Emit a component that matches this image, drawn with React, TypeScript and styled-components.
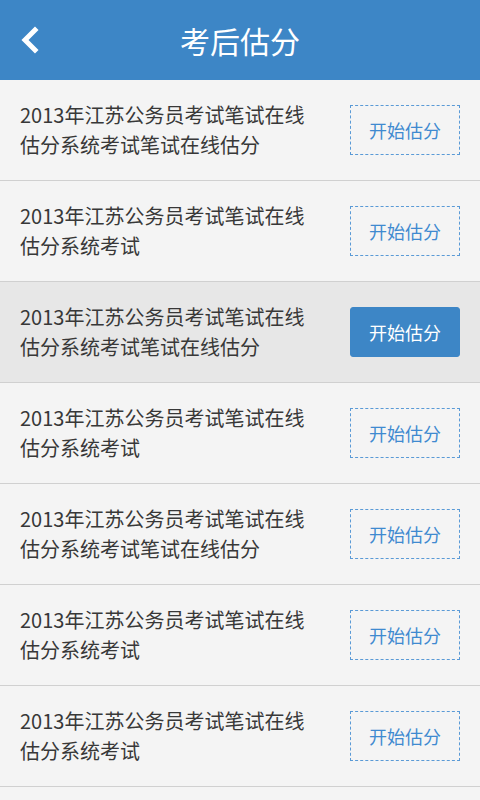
import styled, { createGlobalStyle } from 'styled-components'

const GlobalStyle = createGlobalStyle`
  body {
    margin: 0;
    background-color: #f4f4f4;
    font-family: "Noto Sans CJK SC", sans-serif;
  }
`

const Page = styled.div`
  width: 100%;
  min-height: 800px;
  background-color: #f4f4f4;
`

const Header = styled.header`
  position: relative;
  display: flex;
  align-items: center;
  justify-content: center;
  height: 80px;
  background-color: #3d86c6;
`

const BackButton = styled.button`
  position: absolute;
  left: 17px;
  top: 26px;
  width: 24px;
  height: 28px;
  padding: 0;
  border: none;
  background: none;
  display: flex;
  align-items: center;
  justify-content: center;
`

const Title = styled.h1`
  margin: 0;
  font-size: 30px;
  font-weight: normal;
  color: #ffffff;
  font-family: "Noto Sans CJK SC", sans-serif;
`

const List = styled.ul`
  margin: 0;
  padding: 0;
  list-style: none;
`

const Row = styled.li<{ $active?: boolean }>`
  display: flex;
  align-items: center;
  justify-content: space-between;
  height: 100px;
  padding: 0 20px;
  box-sizing: content-box;
  border-bottom: 1px solid #d0d0d0;
  background-color: ${props => (props.$active ? '#e7e7e7' : '#f4f4f4')};
`

const ExamName = styled.p`
  margin: 0;
  width: 300px;
  font-size: 20px;
  line-height: 30px;
  color: #383838;
  font-family: "Noto Sans CJK SC", sans-serif;
`

const StartButton = styled.button<{ $active?: boolean }>`
  width: 110px;
  height: 50px;
  box-sizing: border-box;
  border: 1px ${props => (props.$active ? 'solid' : 'dashed')}
    ${props => (props.$active ? '#3d86c6' : '#5a9ad6')};
  border-radius: ${props => (props.$active ? '3px' : '0')};
  background-color: ${props => (props.$active ? '#3d86c6' : 'transparent')};
  color: ${props => (props.$active ? '#ffffff' : '#3f8ad0')};
  font-size: 18px;
  font-family: "Noto Sans CJK SC", sans-serif;
  padding: 0;
`

const EXAM_LIST = [
  { name: '2013年江苏公务员考试笔试在线估分系统考试笔试在线估分', active: false },
  { name: '2013年江苏公务员考试笔试在线估分系统考试', active: false },
  { name: '2013年江苏公务员考试笔试在线估分系统考试笔试在线估分', active: true },
  { name: '2013年江苏公务员考试笔试在线估分系统考试', active: false },
  { name: '2013年江苏公务员考试笔试在线估分系统考试笔试在线估分', active: false },
  { name: '2013年江苏公务员考试笔试在线估分系统考试', active: false },
  { name: '2013年江苏公务员考试笔试在线估分系统考试', active: false },
]

const App = () => {
  return (
    <Page>
      <GlobalStyle />
      <Header>
        <BackButton type="button" aria-label="返回">
          <svg width="24" height="28" viewBox="0 0 24 28">
            <path
              d="M18 4 L8 14 L18 24"
              fill="none"
              stroke="#ffffff"
              strokeWidth="5"
              strokeLinecap="square"
              strokeLinejoin="miter"
            />
          </svg>
        </BackButton>
        <Title>考后估分</Title>
      </Header>
      <List>
        {EXAM_LIST.map((el, i) => (
          <Row key={i} $active={el.active}>
            <ExamName>{el.name}</ExamName>
            <StartButton type="button" $active={el.active}>
              开始估分
            </StartButton>
          </Row>
        ))}
      </List>
    </Page>
  )
}

export default App
